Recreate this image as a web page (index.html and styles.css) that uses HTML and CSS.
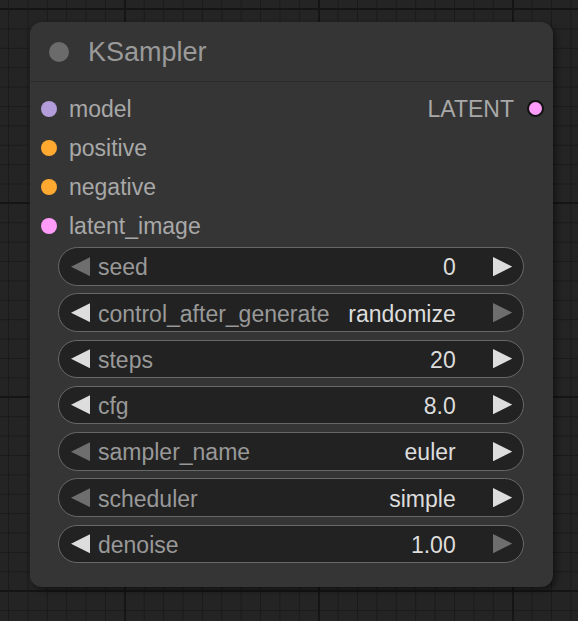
FILE: index.html
```html
<!DOCTYPE html>
<html>
<head>
<meta charset="utf-8">
<link rel="stylesheet" href="styles.css">
</head>
<body>
<div class="canvas">
  <div class="node">
    <div class="title"><span class="title-dot"></span><span class="title-text">KSampler</span></div>
    <div class="slots">
      <div class="slot-row">
        <div class="slot"><span class="dot c-model"></span><span class="stext">model</span></div>
        <div class="slot out"><span class="stext">LATENT</span><span class="dot c-latent ring"></span></div>
      </div>
      <div class="slot-row">
        <div class="slot"><span class="dot c-cond"></span><span class="stext">positive</span></div>
      </div>
      <div class="slot-row">
        <div class="slot"><span class="dot c-cond"></span><span class="stext">negative</span></div>
      </div>
      <div class="slot-row">
        <div class="slot"><span class="dot c-latent"></span><span class="stext">latent_image</span></div>
      </div>
    </div>
    <div class="widgets">
      <div class="widget">
        <svg class="arr off" viewBox="0 0 10 10"><polygon points="10,0 0,5 10,10"/></svg>
        <span class="wlabel">seed</span><span class="wvalue">0</span>
        <svg class="arr" viewBox="0 0 10 10"><polygon points="0,0 10,5 0,10"/></svg>
      </div>
      <div class="widget">
        <svg class="arr" viewBox="0 0 10 10"><polygon points="10,0 0,5 10,10"/></svg>
        <span class="wlabel">control_after_generate</span><span class="wvalue">randomize</span>
        <svg class="arr off" viewBox="0 0 10 10"><polygon points="0,0 10,5 0,10"/></svg>
      </div>
      <div class="widget">
        <svg class="arr" viewBox="0 0 10 10"><polygon points="10,0 0,5 10,10"/></svg>
        <span class="wlabel">steps</span><span class="wvalue">20</span>
        <svg class="arr" viewBox="0 0 10 10"><polygon points="0,0 10,5 0,10"/></svg>
      </div>
      <div class="widget">
        <svg class="arr" viewBox="0 0 10 10"><polygon points="10,0 0,5 10,10"/></svg>
        <span class="wlabel">cfg</span><span class="wvalue">8.0</span>
        <svg class="arr" viewBox="0 0 10 10"><polygon points="0,0 10,5 0,10"/></svg>
      </div>
      <div class="widget">
        <svg class="arr off" viewBox="0 0 10 10"><polygon points="10,0 0,5 10,10"/></svg>
        <span class="wlabel">sampler_name</span><span class="wvalue">euler</span>
        <svg class="arr" viewBox="0 0 10 10"><polygon points="0,0 10,5 0,10"/></svg>
      </div>
      <div class="widget">
        <svg class="arr off" viewBox="0 0 10 10"><polygon points="10,0 0,5 10,10"/></svg>
        <span class="wlabel">scheduler</span><span class="wvalue">simple</span>
        <svg class="arr" viewBox="0 0 10 10"><polygon points="0,0 10,5 0,10"/></svg>
      </div>
      <div class="widget">
        <svg class="arr" viewBox="0 0 10 10"><polygon points="10,0 0,5 10,10"/></svg>
        <span class="wlabel">denoise</span><span class="wvalue">1.00</span>
        <svg class="arr off" viewBox="0 0 10 10"><polygon points="0,0 10,5 0,10"/></svg>
      </div>
    </div>
  </div>
</div>
</body>
</html>
```
FILE: styles.css
```css
html, body {
  margin: 0;
  padding: 0;
  width: 578px;
  height: 621px;
  overflow: hidden;
}

body {
  background-color: #242424;
  background-image:
    linear-gradient(to right, #151515 2px, transparent 2px),
    linear-gradient(to bottom, #151515 2px, transparent 2px),
    linear-gradient(to right, #1a1a1a 1px, transparent 1px),
    linear-gradient(to bottom, #1a1a1a 1px, transparent 1px);
  background-size: 194px 194px, 194px 194px, 19.4px 19.4px, 19.4px 19.4px;
  background-position: 124px 0, 0 8px, 8px 0, 0 9px;
  font-family: "Liberation Sans", Arial, sans-serif;
}

.canvas {
  padding: 22px 0 0 30px;
}

.node {
  width: 523px;
  height: 565px;
  box-sizing: border-box;
  background: #353535;
  border-radius: 12px;
  box-shadow: 3px 3px 6px rgba(0, 0, 0, 0.45);
  display: flex;
  flex-direction: column;
}

.title {
  height: 59px;
  border-bottom: 1px solid #2b2b2b;
  display: flex;
  align-items: center;
  padding-left: 19px;
  gap: 19px;
}

.title-dot {
  width: 20px;
  height: 20px;
  border-radius: 50%;
  background: #6b6b6b;
}

.title-text {
  font-size: 27px;
  color: #9a9a9a;
  line-height: 1;
  padding-top: 2px;
}

.slots {
  padding-top: 7px;
  display: flex;
  flex-direction: column;
}

.slot-row {
  height: 39px;
  display: flex;
  align-items: center;
  justify-content: space-between;
  padding: 0 9px 0 11px;
}

.slot {
  display: flex;
  align-items: center;
  gap: 12px;
  font-size: 23px;
  color: #a8a8a8;
}

.stext {
  padding-top: 2px;
}

.slot.out {
  gap: 13px;
}

.dot {
  width: 16px;
  height: 16px;
  border-radius: 50%;
  box-sizing: border-box;
}

.c-model { background: #b39ddb; }
.c-cond { background: #ffa931; }
.c-latent { background: #ff9cf9; }

.ring {
  width: 17px;
  height: 17px;
  border: 2px solid #111;
}

.widgets {
  padding: 2px 29px 0 28px;
  display: flex;
  flex-direction: column;
  gap: 7.7px;
}

.widget {
  height: 38.6px;
  box-sizing: border-box;
  border: 1px solid #686868;
  background: #222222;
  border-radius: 20px;
  display: flex;
  align-items: center;
  padding: 0 11px 0 11.7px;
  font-size: 23px;
}

.arr {
  width: 19.3px;
  height: 19.3px;
  flex: none;
  fill: #dddddd;
}

.arr.off {
  fill: #6e6e6e;
}

.wlabel {
  margin-left: 8px;
  color: #999999;
  flex: 1;
  white-space: nowrap;
  padding-top: 3px;
}

.wvalue {
  color: #dddddd;
  margin-right: 37px;
  white-space: nowrap;
  padding-top: 3px;
}
```
